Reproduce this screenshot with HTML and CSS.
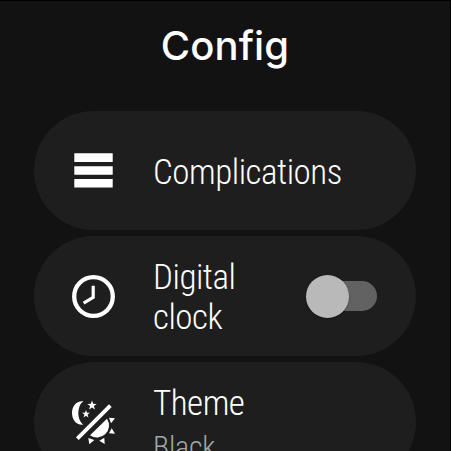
FILE: index.html
```
<!DOCTYPE html>
<html lang="en"><head><meta charset="utf-8"><title>Config</title><link rel="stylesheet" href="styles.css"></head>
<body><main class="screen"><h1 class="title">Config</h1>
<div class="list">
<section class="card first"><svg class="icon" viewBox="0 0 43 43"><path fill="#fff" d="M2.300 4.300h38.400v8.700h-38.400zM2.300 17.300h38.400v8.400h-38.400zM2.300 30h38.400v8.600h-38.400z"/></svg><p class="label">Complications</p></section>
<section class="card"><svg class="icon" viewBox="0 0 43 43" fill="none" stroke="#fff"><circle cx="21.500" cy="21.500" r="19.300" stroke-width="4.300"/><path stroke-width="3.200" d="M21.200 10.700v11.600l-9.600 5.800"/></svg><p class="label">Digital<br>clock</p><div class="switch"><span class="thumb"></span></div></section>
<section class="card"><svg class="icon" viewBox="0 0 43 43" fill="#fff"><path d="M11.500.3C4.500-.5 0 5 0 12S4.500 24.500 11.500 23.600C4.700 19.500 4.700 4.500 11.500.3z"/><path d="M20-.5l1.200 3.300 3.500.1-2.800 2.200 1 3.400-2.900-2-2.900 2 1-3.400-2.800-2.200 3.500-.1zM14 9l1 2.700 2.900.1-2.300 1.800.8 2.800-2.400-1.600-2.400 1.600.8-2.800-2.300-1.800 2.900-.1z"/><path d="M37 3.300l2.700 2.700-33 33L4 36.300zM35 17.800A12 12 0 0 1 18 34.200z"/><path d="M37 16.700l6 .6-4 5zM39.700 27.300l3.300 5.400-6-.4zM32.300 36.700l.4 6.300-5.400-3.300zM16.300 37l6 2-5 4.300z"/></svg><div class="text"><p class="label">Theme</p><p class="sub">Black</p></div></section>
</div></main></body></html>
```
FILE: styles.css
```
*{box-sizing:border-box}
body{margin:0;background:#121212;color:#fff;overflow:hidden;font-family:Roboto,sans-serif}
.screen{height:451px;overflow:hidden;padding:21px 34px 0 34px;border-top:1px solid #000;border-right:1px solid #000}
.title{margin:0;height:89px;text-align:center;font:500 40px/48px Inter,sans-serif;letter-spacing:.1px}
.list{display:flex;flex-direction:column;gap:6px}
.card{height:120px;flex:none;border-radius:60px;background:#1e1e1e;display:flex;align-items:center;padding:0 39px 0 38px}
.first{height:119px}
.icon{width:43px;height:43px;flex:none;margin:1px 38px 0 0;overflow:visible}
.first .icon{margin-top:0}
.label{margin:0;padding-top:4px;font-size:35px;line-height:40px;font-weight:300;font-stretch:75%;letter-spacing:-.48px}
.first .label{padding-top:4px}
.sub{margin:0;padding-top:3px;font-size:30px;line-height:40px;font-weight:300;font-stretch:75%;letter-spacing:-.2px;color:#a5a5a5}
.text{padding-top:2px}
.switch{margin-left:auto;width:64px;height:30px;border-radius:15px;background:#626262;position:relative}
.thumb{position:absolute;left:-7px;top:-6px;width:43px;height:43px;border-radius:50%;background:#b9b9b9;box-shadow:0 1px 2px rgba(0,0,0,.3)}
```
